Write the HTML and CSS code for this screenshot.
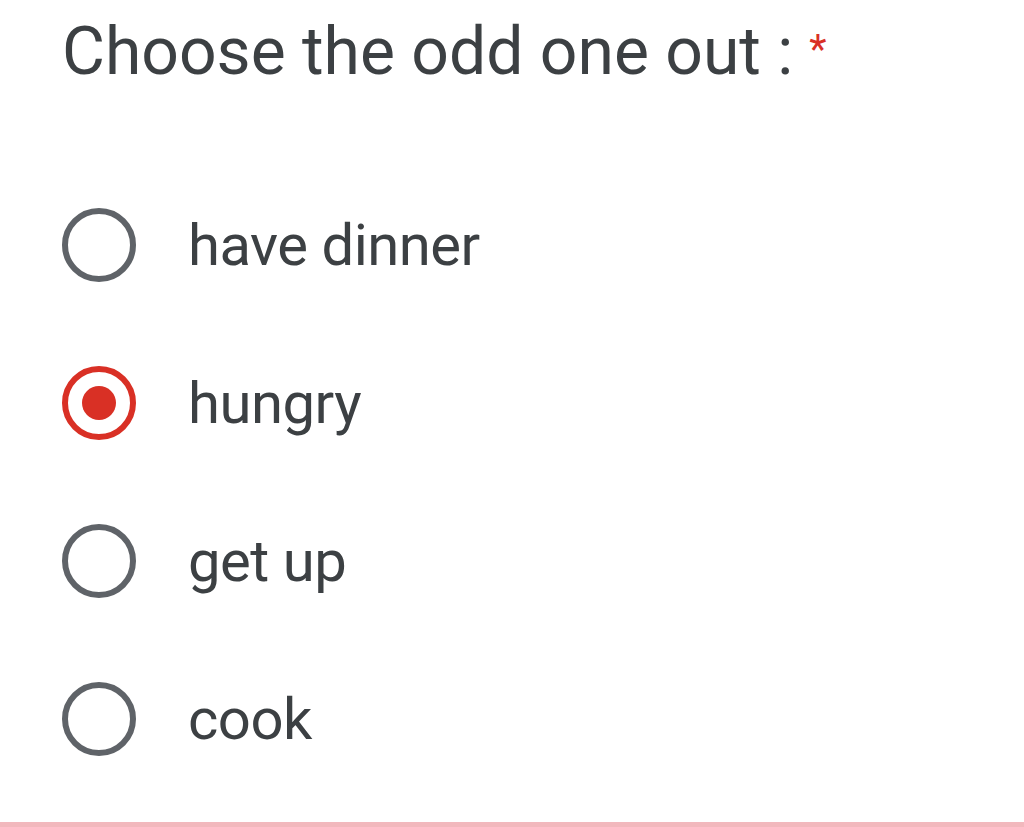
FILE: index.html
```html
<!DOCTYPE html>
<html lang="en">
<head>
    <meta charset="UTF-8">
    <meta name="viewport" content="width=device-width, initial-scale=1.0">
    <title>Choose the odd one out</title>
    <link rel="stylesheet" href="styles.css">
</head>
<body>
    <div class="question">
        <div class="title">
            <span class="title-text">Choose the odd one out :</span>
            <span class="req">*</span>
        </div>

        <div class="options">
            <label class="option">
                <span class="radio"></span>
                <span class="label">have dinner</span>
            </label>
            <label class="option">
                <span class="radio checked"></span>
                <span class="label">hungry</span>
            </label>
            <label class="option">
                <span class="radio"></span>
                <span class="label">get up</span>
            </label>
            <label class="option">
                <span class="radio"></span>
                <span class="label">cook</span>
            </label>
        </div>
    </div>
</body>
</html>
```

FILE: styles.css
```css
body {
    margin: 0;
    padding: 0;
    background-color: #fff;
    font-family: Roboto, "Liberation Sans", Arial, sans-serif;
    color: #202124;
    height: 827px;
    overflow: hidden;
}
.question {
    height: 827px;
    border-bottom: 5px solid #f2b8bd;
    padding-left: 62px;
    box-sizing: border-box;
}
.title {
    display: flex;
    align-items: flex-start;
    gap: 16px;
    padding-top: 12px;
}
.title-text {
    font-size: 66px;
    line-height: 80px;
    color: #3c4043;
}
.req {
    color: #d93025;
    font-size: 40px;
    line-height: 40px;
    margin-top: 18px;
}
.options {
    display: flex;
    flex-direction: column;
    margin-top: 74px;
}
.option {
    display: flex;
    align-items: center;
    height: 158px;
}
.radio {
    width: 74px;
    height: 74px;
    box-sizing: border-box;
    border: 6px solid #5f6368;
    border-radius: 50%;
    flex-shrink: 0;
    display: flex;
    align-items: center;
    justify-content: center;
}
.radio.checked {
    border-color: #d93025;
}
.radio.checked::after {
    content: "";
    width: 34px;
    height: 34px;
    border-radius: 50%;
    background-color: #d93025;
}
.label {
    margin-left: 52px;
    font-size: 58px;
    letter-spacing: -0.5px;
    color: #3c4043;
}
```
